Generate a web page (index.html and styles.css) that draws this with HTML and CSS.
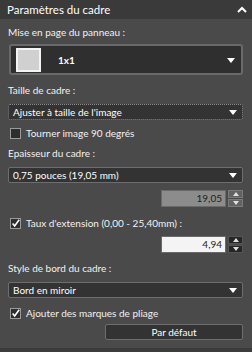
FILE: index.html
```html
<!DOCTYPE html>
<html>
  <head>
    <title>Paramètres du cadre</title>
    <link rel="stylesheet" href="styles.css">
  </head>
  <body>
    <div class="panel">
      <div class="panel-header">
        <span class="panel-title">Paramètres du cadre</span>
        <svg class="collapse-icon" width="10" height="7" viewBox="0 0 10 7">
          <path d="M1 6 L5 2 L9 6" fill="none" stroke="#fff" stroke-width="2"/>
        </svg>
      </div>

      <div class="panel-body">
        <p class="field-label label-first">Mise en page du panneau :</p>
        <div class="layout-select">
          <span class="layout-swatch"></span>
          <span class="layout-name">1x1</span>
          <span class="select-arrow"></span>
        </div>

        <p class="field-label label-size">Taille de cadre :</p>
        <div class="select is-focused">
          <span>Ajuster à taille de l'image</span>
          <span class="select-arrow"></span>
        </div>

        <label class="check-row check-rotate">
          <span class="check-box"></span>
          Tourner image 90 degrés
        </label>

        <p class="field-label label-thickness">Epaisseur du cadre :</p>
        <div class="select">
          <span>0,75 pouces (19,05 mm)</span>
          <span class="select-arrow"></span>
        </div>

        <div class="number-row number-first">
          <span class="number-input is-disabled">19,05</span>
          <span class="spinner">
            <span class="spin-btn"><span class="spin-up"></span></span>
            <span class="spin-btn"><span class="spin-down"></span></span>
          </span>
        </div>

        <label class="check-row check-rate">
          <span class="check-box">
            <svg width="11" height="11" viewBox="0 0 11 11"><path d="M2 5.5 L4.5 8.5 L10 1" fill="none" stroke="#fff" stroke-width="2"/></svg>
          </span>
          Taux d'extension (0,00 - 25,40mm) :
        </label>

        <div class="number-row number-second">
          <span class="number-input">4,94</span>
          <span class="spinner is-active">
            <span class="spin-btn"><span class="spin-up"></span></span>
            <span class="spin-btn"><span class="spin-down"></span></span>
          </span>
        </div>

        <p class="field-label label-style">Style de bord du cadre :</p>
        <div class="select">
          <span>Bord en miroir</span>
          <span class="select-arrow"></span>
        </div>

        <label class="check-row check-fold">
          <span class="check-box">
            <svg width="11" height="11" viewBox="0 0 11 11"><path d="M2 5.5 L4.5 8.5 L10 1" fill="none" stroke="#fff" stroke-width="2"/></svg>
          </span>
          Ajouter des marques de pliage
        </label>

        <div class="button-row">
          <button type="button" class="default-button">Par défaut</button>
        </div>
      </div>
    </div>
  </body>
</html>
```

FILE: styles.css
```css
body {
  margin: 0;
  background-color: #3c3c3c;
  font-family: Lato, "Open Sans", sans-serif;
  font-size: 10px;
  color: #f2f2f2;
}
.panel {
  width: 252px;
  height: 348px;
  background-color: #4a4a4a;
  border-bottom: 1px solid #3a3a3a;
}
.panel-header {
  height: 19px;
  background-color: #3a3a3a;
  display: flex;
  align-items: center;
  justify-content: space-between;
  padding: 0 5px 0 7px;
}
.panel-title {
  font-size: 11.5px;
  color: #ffffff;
}
.panel-body {
  padding: 0 9px 0 8px;
  display: flex;
  flex-direction: column;
}
.field-label {
  margin: 0;
  height: 15px;
  line-height: 15px;
}
.label-first {
  margin-top: 6px;
}
.layout-select {
  margin-top: 4px;
  margin-left: 1px;
  height: 27px;
  border: 2px solid #696969;
  border-radius: 3px;
  background-color: #2f2f2f;
  display: flex;
  align-items: center;
  padding: 0 6px 0 5px;
}
.layout-swatch {
  width: 21px;
  height: 20px;
  background-color: #d0d0d0;
  border: 2px solid #f4f4f4;
}
.layout-name {
  flex: 1;
  margin-left: 17px;
  font-weight: bold;
  color: #ffffff;
}
.select-arrow {
  width: 0;
  height: 0;
  border-left: 4px solid transparent;
  border-right: 4px solid transparent;
  border-top: 5px solid #ffffff;
  margin-top: 1px;
}
.label-size {
  margin-top: 8px;
}
.select {
  margin-top: 6px;
  height: 14px;
  border: 1px solid #6e6e6e;
  border-radius: 2px;
  background-color: #333333;
  display: flex;
  align-items: center;
  justify-content: space-between;
  padding: 0 5px 0 4px;
  color: #ffffff;
}
.is-focused {
  border: 1px dotted #8c8c8c;
}
.check-row {
  display: flex;
  align-items: center;
  gap: 5px;
  height: 14px;
  padding-left: 2px;
}
.check-box {
  width: 9px;
  height: 9px;
  border: 1px solid #9a9a9a;
  background-color: #2e2e2e;
  display: flex;
  align-items: center;
  justify-content: center;
  overflow: visible;
}
.check-rotate {
  margin-top: 6px;
}
.label-thickness {
  margin-top: 6px;
}
.number-row {
  display: flex;
  justify-content: flex-end;
  gap: 2px;
}
.number-first {
  margin-top: 7px;
}
.number-input {
  width: 60px;
  height: 15px;
  border: 1px solid #6a6a6a;
  background-color: #f4f4f4;
  color: #222222;
  text-align: right;
  line-height: 15px;
  padding-right: 3px;
}
.number-input.is-disabled {
  background-color: #8c8c8c;
  color: #222222;
}
.spinner {
  width: 15px;
  height: 17px;
  display: flex;
  flex-direction: column;
  gap: 1px;
}
.spin-btn {
  flex: 1;
  background-color: #626262;
  border: 1px solid #7a7a7a;
  display: flex;
  align-items: center;
  justify-content: center;
}
.spinner.is-active .spin-btn {
  background-color: #262626;
  border-color: #555555;
}
.spin-up {
  width: 0;
  height: 0;
  border-left: 3px solid transparent;
  border-right: 3px solid transparent;
  border-bottom: 4px solid #e0e0e0;
}
.spin-down {
  width: 0;
  height: 0;
  border-left: 3px solid transparent;
  border-right: 3px solid transparent;
  border-top: 4px solid #e0e0e0;
}
.check-rate {
  margin-top: 9px;
}
.number-second {
  margin-top: 6px;
}
.label-style {
  margin-top: 8px;
}
.check-fold {
  margin-top: 8px;
}
.button-row {
  margin-top: 4px;
  display: flex;
  justify-content: flex-end;
}
.default-button {
  width: 138px;
  height: 16px;
  padding: 0;
  border: 1px solid #6e6e6e;
  border-radius: 2px;
  background-color: #333333;
  color: #ffffff;
  font-family: Lato, "Open Sans", sans-serif;
  font-size: 10px;
}
```
